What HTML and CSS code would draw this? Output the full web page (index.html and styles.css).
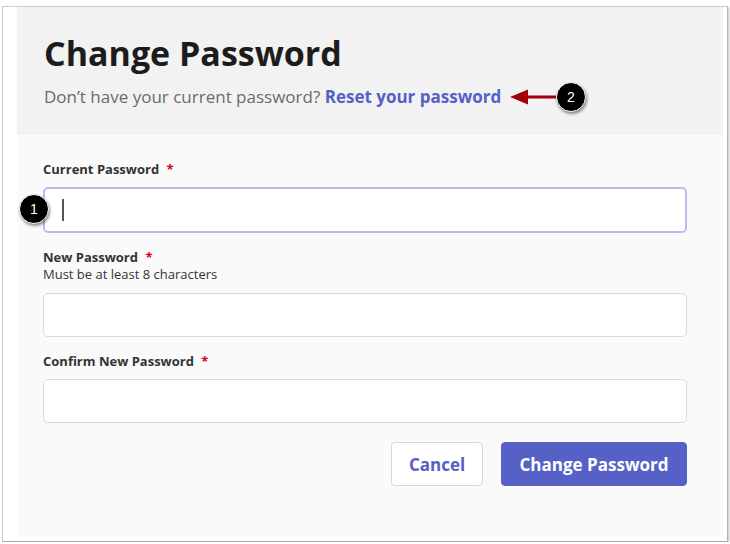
FILE: index.html
```html
<!DOCTYPE html>
<html>
<head>
<meta charset="utf-8">
<link rel="stylesheet" href="styles.css">
</head>
<body>
<div class="frame">
  <div class="panel">
    <div class="header">
      <h1 class="title">Change Password</h1>
      <p class="subtitle">Don’t have your current password? <a class="link" href="#">Reset your password</a></p>
      <div class="callout callout-2">
        <svg class="arrow" width="48" height="18" viewBox="0 0 48 18"><path d="M0 9 L18 1.5 L18 7.5 L48 7.5 L48 10.5 L18 10.5 L18 16.5 Z" fill="#a3000b"/></svg>
        <span class="badge">2</span>
      </div>
    </div>
    <div class="body">
      <div class="field first">
        <label class="label">Current Password <span class="req">*</span></label>
        <div class="input focused"><span class="caret"></span></div>
        <span class="badge badge-1">1</span>
      </div>
      <div class="field">
        <label class="label">New Password <span class="req">*</span></label>
        <div class="hint">Must be at least 8 characters</div>
        <div class="input after-hint"></div>
      </div>
      <div class="field">
        <label class="label">Confirm New Password <span class="req">*</span></label>
        <div class="input"></div>
      </div>
      <div class="actions">
        <button class="btn btn-secondary">Cancel</button>
        <button class="btn btn-primary">Change Password</button>
      </div>
    </div>
  </div>
</div>
</body>
</html>
```
FILE: styles.css
```css
html, body {
  margin: 0;
  padding: 0;
  background: #ffffff;
}
body {
  font-family: "Open Sans", "Liberation Sans", sans-serif;
}
.frame {
  box-sizing: border-box;
  margin: 6px 2px 0 2px;
  width: 726px;
  height: 536px;
  border: 1px solid #cfcfcf;
  border-right-color: #b5b5b5;
  border-bottom-color: #a8a8a8;
  box-shadow: 1px 1px 2px rgba(0,0,0,0.25);
  padding: 0 4px 4px 14px;
  background: #fff;
}
.panel {
  height: 100%;
  display: flex;
  flex-direction: column;
}
.header {
  position: relative;
  box-sizing: border-box;
  height: 128px;
  background: #f2f2f2;
  padding: 25px 27px 0 27px;
}
.title {
  margin: 0;
  font-size: 34px;
  line-height: 42px;
  font-weight: 700;
  color: #1c1c1c;
}
.subtitle {
  margin: 11px 0 0 0;
  font-size: 17px;
  line-height: 24px;
  color: #6b6b6b;
  white-space: nowrap;
}
.link {
  color: #5560c8;
  font-size: 17px;
  font-weight: 700;
  text-decoration: none;
}
.callout {
  position: absolute;
  left: 493px;
  top: 75px;
  display: flex;
  align-items: center;
}
.arrow {
  display: block;
  margin-right: -2px;
}
.badge {
  box-sizing: border-box;
  width: 30px;
  height: 30px;
  border-radius: 50%;
  background: #000;
  border: 1.5px solid #fff;
  box-shadow: 1px 2px 3px rgba(0,0,0,0.45);
  color: #fff;
  font-family: "Liberation Sans", Arial, sans-serif;
  font-size: 14px;
  display: flex;
  align-items: center;
  justify-content: center;
}
.body {
  flex: 1;
  background: #fafafa;
  padding: 25px 36px 0 26px;
  display: flex;
  flex-direction: column;
}
.field {
  position: relative;
  margin-top: 15px;
}
.field.first {
  margin-top: 0;
}
.label {
  display: block;
  font-size: 13px;
  line-height: 18px;
  font-weight: 700;
  color: #333333;
}
.req {
  color: #d0021b;
  margin-left: 4px;
}
.hint {
  font-size: 13px;
  line-height: 16px;
  color: #333333;
}
.input {
  box-sizing: border-box;
  margin-top: 9px;
  height: 44px;
  background: #ffffff;
  border: 1px solid #dadada;
  border-radius: 5px;
  position: relative;
}
.input.after-hint {
  margin-top: 11px;
}
.input.focused {
  height: 46px;
  border: 2px solid #b8bcef;
}
.caret {
  position: absolute;
  left: 17px;
  top: 10px;
  width: 1.5px;
  height: 22px;
  background: #555;
}
.badge-1 {
  position: absolute;
  left: -24px;
  top: 34px;
}
.actions {
  display: flex;
  justify-content: flex-end;
  gap: 18px;
  margin-top: 19px;
}
.btn {
  box-sizing: border-box;
  height: 44px;
  border-radius: 4px;
  font-family: "Open Sans", "Liberation Sans", sans-serif;
  font-size: 17px;
  font-weight: 700;
  padding: 0;
  white-space: nowrap;
}
.btn-secondary {
  width: 92px;
  background: #ffffff;
  border: 1px solid #d8d8d8;
  color: #5560c8;
}
.btn-primary {
  width: 186px;
  background: #5561c6;
  border: 1px solid #5561c6;
  color: #ffffff;
}
```
